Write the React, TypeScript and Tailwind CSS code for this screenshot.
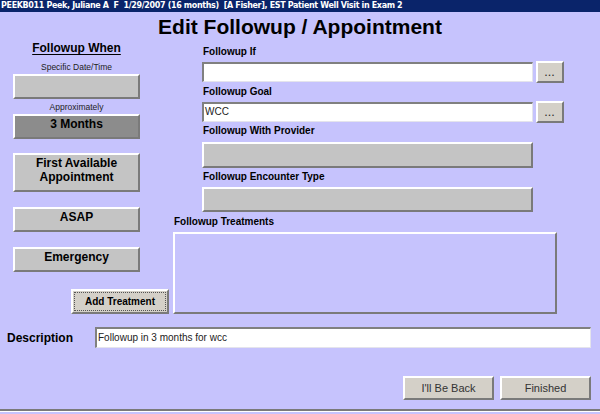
const raised = "border-t-2 border-l-2 border-b-2 border-r-2 border-t-white border-l-white border-b-[#7a7a7a] border-r-[#7a7a7a]";
const sunken = "border-t-2 border-l-2 border-b border-r border-t-[#808080] border-l-[#808080] border-b-[#e4e4ec] border-r-[#e4e4ec]";

function WhenButton({ label, tall, selected }: { label?: React.ReactNode; tall?: boolean; selected?: boolean }) {
  return (
    <div
      className={`w-[127px] ${tall ? "h-[39px]" : "h-[25px]"} ${selected ? "bg-[#8c8c8c]" : "bg-[#c4c4c4]"} ${raised} flex items-start justify-center pt-[1px] text-[12px] font-bold leading-[14px] text-black text-center`}
    >
      {label}
    </div>
  );
}

function Label({ children, className = "" }: { children: React.ReactNode; className?: string }) {
  return <div className={`text-[10px] font-bold leading-[12px] text-black ${className}`}>{children}</div>;
}

function TextRow({ value, className = "" }: { value?: string; className?: string }) {
  return (
    <div className={`flex items-center gap-[3px] ${className}`}>
      <div className={`w-[331px] h-[20px] bg-white ${sunken} px-[1px] text-[10px] leading-[16px] text-[#222]`}>{value}</div>
      <div className={`w-[28px] h-[22px] bg-[#d4d0c8] ${raised} flex items-center justify-center text-[9px] font-bold tracking-[1px] text-[#333] leading-none pt-[3px]`}>
        ...
      </div>
    </div>
  );
}

export default function App() {
  return (
    <div className="w-[600px] h-[414px] bg-[#c6c3fd] overflow-hidden flex flex-col" style={{ fontFamily: '"Liberation Sans", Arial, sans-serif' }}>
      {/* patient bar */}
      <div
        className="h-[12px] bg-[#0a246a] text-white text-[8px] font-bold leading-[12px] pl-[1px] whitespace-pre tracking-[-0.35px]"
        style={{ fontFamily: '"DejaVu Sans", Verdana, sans-serif' }}
      >
        PEEKB011 Peek, Juliane A  F  1/29/2007 (16 months)  [A Fisher], EST Patient Well Visit in Exam 2
      </div>

      <div className="h-[28px] text-center text-[21px] font-bold leading-[24px] pt-[3px] text-black">Edit Followup / Appointment</div>

      <div className="flex pl-[13px] gap-[4px]">
        {/* left column */}
        <div className="w-[156px] flex flex-col">
          <div className="w-[127px] mt-[1px] text-center text-[12px] font-bold leading-[14px] underline underline-offset-2">Followup When</div>
          <div className="w-[127px] mt-[7px] text-center text-[8.5px] leading-[10px] text-[#222]">Specific Date/Time</div>
          <div className="mt-[2px]">
            <WhenButton />
          </div>
          <div className="w-[127px] mt-[3px] text-center text-[8.5px] leading-[10px] text-[#222]">Approximately</div>
          <div className="mt-[2px]">
            <WhenButton label="3 Months" selected />
          </div>
          <div className="mt-[14px]">
            <WhenButton
              tall
              label={
                <>
                  First Available
                  <br />
                  Appointment
                </>
              }
            />
          </div>
          <div className="mt-[15px]">
            <WhenButton label="ASAP" />
          </div>
          <div className="mt-[15px]">
            <WhenButton label="Emergency" />
          </div>
          <div className="mt-[17px] self-end">
            <div className={`w-[98px] h-[25px] bg-[#d4d0c8] ${raised} p-[1px]`}>
              <div className="h-full border border-dotted border-[#555] flex items-center justify-center text-[10px] font-bold text-black">
                Add Treatment
              </div>
            </div>
          </div>
        </div>

        {/* right column */}
        <div className="flex flex-col">
          <div className="pl-[29px] flex flex-col">
            <Label className="mt-[6px] pl-[1px]">Followup If</Label>
            <TextRow className="mt-[3px]" />
            <Label className="mt-[3px] pl-[1px]">Followup Goal</Label>
            <TextRow className="mt-[3px]" value="WCC" />
            <Label className="mt-[2px] pl-[1px]">Followup With Provider</Label>
            <div className={`mt-[5px] w-[331px] h-[26px] bg-[#c4c4c4] ${raised}`} />
            <Label className="mt-[3px] pl-[1px]">Followup Encounter Type</Label>
            <div className={`mt-[4px] w-[331px] h-[25px] bg-[#c4c4c4] ${raised}`} />
          </div>
          <Label className="mt-[4px] pl-[1px]">Followup Treatments</Label>
          <div className={`mt-[4px] w-[384px] h-[82px] ${raised} border-t-[#e8e8f4] border-l-[#e8e8f4]`} />
        </div>
      </div>

      {/* description */}
      <div className="flex items-center mt-[13px] pl-[7px]">
        <div className="w-[88px] text-[12px] font-bold leading-[14px]">Description</div>
        <div className={`w-[496px] h-[21px] bg-white ${sunken} px-[1px] text-[10px] leading-[17px] text-[#222]`}>
          Followup in 3 months for wcc
        </div>
      </div>

      {/* actions */}
      <div className="flex justify-end gap-[6px] pr-[9px] mt-[28px]">
        <div className={`w-[91px] h-[24px] bg-[#d4d0c8] ${raised} flex items-center justify-center text-[11px] text-[#333]`}>I'll Be Back</div>
        <div className={`w-[91px] h-[24px] bg-[#d4d0c8] ${raised} flex items-center justify-center text-[11px] text-[#333]`}>Finished</div>
      </div>

      <div className="mt-[9px] border-t-2 border-[#7a7a7a]" />
      <div className="border-t border-white" />
    </div>
  );
}
